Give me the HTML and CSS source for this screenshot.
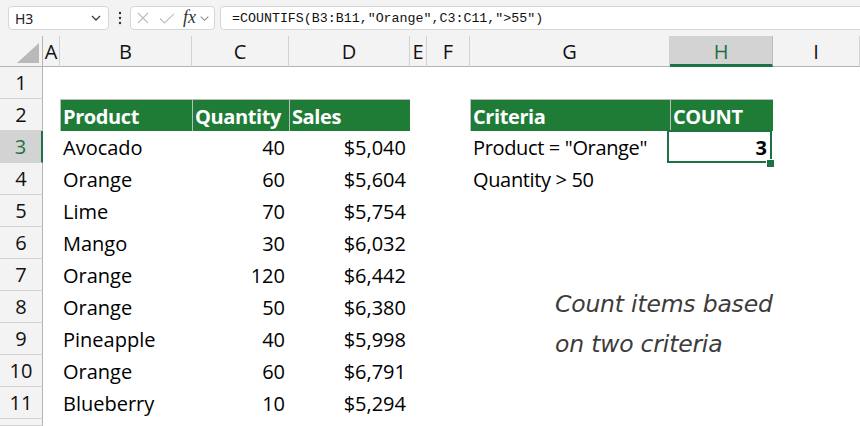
FILE: index.html
```html
<!DOCTYPE html>
<html>
<head>
<meta charset="utf-8">
<link rel="stylesheet" href="styles.css">
</head>
<body>
<div class="fbar">
  <div class="namebox">
    <span class="nbtext">H3</span>
    <svg class="nbchev" width="10" height="6" viewBox="0 0 10 6"><path d="M1 1 L5 5 L9 1" fill="none" stroke="#3a3a3a" stroke-width="1.3"/></svg>
  </div>
  <div class="dots">
    <svg width="4" height="14" viewBox="0 0 4 14"><circle cx="2" cy="2" r="1.2" fill="#333"/><circle cx="2" cy="7" r="1.2" fill="#333"/><circle cx="2" cy="12" r="1.2" fill="#333"/></svg>
  </div>
  <div class="fxbox">
    <svg class="ic-x" width="12" height="12" viewBox="0 0 12 12"><path d="M1 1 L11 11 M11 1 L1 11" stroke="#bdbdbd" stroke-width="1.1" fill="none"/></svg>
    <svg class="ic-ok" width="16" height="11" viewBox="0 0 16 11"><path d="M1 5.5 L5.5 10 L15 0.8" stroke="#bdbdbd" stroke-width="1.1" fill="none"/></svg>
    <span class="fx">fx</span>
    <svg class="ic-chev" width="9" height="5" viewBox="0 0 9 5"><path d="M0.7 0.7 L4.5 4.3 L8.3 0.7" fill="none" stroke="#8a8a8a" stroke-width="1.1"/></svg>
  </div>
  <div class="formula">=COUNTIFS(B3:B11,"Orange",C3:C11,"&gt;55")</div>
</div>

<div class="sheet">
  <div class="corner"><div class="tri"></div></div>
  <div class="ch">A</div><div class="ch">B</div><div class="ch">C</div><div class="ch">D</div><div class="ch">E</div><div class="ch">F</div><div class="ch">G</div><div class="ch ch-sel">H</div><div class="ch">I</div>

  <div class="rh">1</div><div></div><div></div><div></div><div></div><div></div><div></div><div></div><div></div><div></div>

  <div class="rh">2</div><div></div>
  <div class="c hd hd-first">Product</div><div class="c hd">Quantity</div><div class="c hd">Sales</div>
  <div></div><div></div>
  <div class="c hd hd-first">Criteria</div><div class="c hd">COUNT</div><div></div>

  <div class="rh rh-sel">3</div><div></div>
  <div class="c">Avocado</div><div class="c num">40</div><div class="c num">$5,040</div>
  <div></div><div></div>
  <div class="c tight">Product = "Orange"</div><div class="c num bold sel">3</div><div></div>

  <div class="rh">4</div><div></div>
  <div class="c">Orange</div><div class="c num">60</div><div class="c num">$5,604</div>
  <div></div><div></div>
  <div class="c tight">Quantity &gt; 50</div><div></div><div></div>

  <div class="rh">5</div><div></div>
  <div class="c">Lime</div><div class="c num">70</div><div class="c num">$5,754</div>
  <div></div><div></div><div></div><div></div><div></div>

  <div class="rh">6</div><div></div>
  <div class="c">Mango</div><div class="c num">30</div><div class="c num">$6,032</div>
  <div></div><div></div><div></div><div></div><div></div>

  <div class="rh">7</div><div></div>
  <div class="c">Orange</div><div class="c num">120</div><div class="c num">$6,442</div>
  <div></div><div></div><div></div><div></div><div></div>

  <div class="rh">8</div><div></div>
  <div class="c">Orange</div><div class="c num">50</div><div class="c num">$6,380</div>
  <div></div><div></div><div></div><div></div><div></div>

  <div class="rh">9</div><div></div>
  <div class="c">Pineapple</div><div class="c num">40</div><div class="c num">$5,998</div>
  <div></div><div></div><div></div><div></div><div></div>

  <div class="rh">10</div><div></div>
  <div class="c">Orange</div><div class="c num">60</div><div class="c num">$6,791</div>
  <div></div><div></div><div></div><div></div><div></div>

  <div class="rh">11</div><div></div>
  <div class="c">Blueberry</div><div class="c num">10</div><div class="c num">$5,294</div>
  <div></div><div></div><div></div><div></div><div></div>

  <div class="rh"></div><div></div><div></div><div></div><div></div><div></div><div></div><div></div><div></div><div></div>
</div>

<div class="note">Count items based<br>on two criteria</div>
</body>
</html>
```

FILE: styles.css
```css
* { box-sizing: border-box; }
html, body { margin: 0; padding: 0; }
body {
  width: 860px;
  height: 426px;
  overflow: hidden;
  background: #ffffff;
  font-family: "Open Sans", "Noto Sans", sans-serif;
  color: #000;
  position: relative;
}

/* formula bar */
.fbar {
  height: 36px;
  background: #f3f3f3;
  display: flex;
  align-items: flex-start;
  padding: 6px 0 0 8px;
  overflow: hidden;
}
.namebox {
  width: 101px;
  height: 24px;
  background: #fff;
  border: 1px solid #d6d6d6;
  border-radius: 4px;
  display: flex;
  align-items: center;
  justify-content: space-between;
  padding: 0 7px 0 6px;
}
.nbtext {
  font-family: "Noto Sans", "Open Sans", sans-serif;
  font-size: 14px;
  color: #222;
}
.dots {
  width: 21px;
  height: 24px;
  display: flex;
  align-items: center;
  justify-content: center;
}
.fxbox {
  width: 85px;
  height: 24px;
  background: #fff;
  border: 1px solid #d6d6d6;
  border-radius: 4px;
  display: flex;
  align-items: center;
  padding-left: 6px;
}
.ic-x { margin-right: 10px; }
.ic-ok { margin-right: 8px; }
.fx {
  font-family: "Liberation Serif", "DejaVu Serif", serif;
  font-style: italic;
  font-size: 18px;
  color: #333;
  line-height: 1;
  margin-right: 4px;
  margin-top: -2px;
}
.formula {
  flex: 1;
  height: 24px;
  margin-left: 5px;
  margin-right: -10px;
  background: #fff;
  border: 1px solid #d6d6d6;
  border-radius: 4px;
  font-family: "Liberation Mono", "DejaVu Sans Mono", monospace;
  font-size: 13.3px;
  color: #111;
  display: flex;
  align-items: center;
  padding-left: 11px;
  white-space: nowrap;
}

/* sheet grid */
.sheet {
  height: 390px;
  overflow: hidden;
  display: grid;
  grid-template-columns: 43px 17px 132px 97px 121px 17px 43px 200px 103px 1fr;
  grid-template-rows: 31px repeat(11, 32px) 1fr;
  font-size: 20px;
  line-height: 1;
}
.corner {
  background: #f3f3f3;
  border-right: 1px solid #b4b4b4;
  border-bottom: 1px solid #b4b4b4;
  position: relative;
}
.tri {
  position: absolute;
  left: 17px;
  top: 7px;
  width: 22px;
  height: 20px;
  background: #b9b9b9;
  clip-path: polygon(100% 0, 100% 100%, 0 100%);
}
.ch {
  background: #f3f3f3;
  border-right: 1px solid #d2d2d2;
  border-bottom: 1px solid #b4b4b4;
  display: flex;
  align-items: center;
  justify-content: center;
  padding-top: 2px;
  color: #111;
}
.ch-sel {
  background: #d3d3d3;
  color: #1f7145;
  border-bottom: 3px solid #1e7145;
  border-right-color: #bdbdbd;
  padding-top: 4px;
}
.rh {
  background: #f3f3f3;
  border-right: 1px solid #b4b4b4;
  border-bottom: 1px solid #d2d2d2;
  display: flex;
  align-items: center;
  justify-content: center;
  padding-top: 1px;
  color: #111;
}
.rh-sel {
  background: #d3d3d3;
  color: #1f7145;
  border-right: 2px solid #1e7145;
}

.c {
  display: flex;
  align-items: center;
  padding: 2px 3px 0 3px;
  white-space: nowrap;
  overflow: visible;
}
.tight { letter-spacing: -0.35px; }
.num { justify-content: flex-end; padding-right: 4px; }
.bold { font-weight: 700; }

.hd {
  background: #1e7c37;
  color: #fff;
  font-weight: 700;
  letter-spacing: -0.4px;
  padding-left: 2px;
  border-top: 1px solid #bdbdbd;
}
.hd + .hd { border-left: 1px solid #bdbdbd; }
.hd-first { border-left: 1px solid #bdbdbd; }

.sel { position: relative; padding-right: 6px; }
.sel::after {
  content: "";
  position: absolute;
  left: -3px;
  top: -1px;
  right: 1px;
  bottom: 0;
  border: 2px solid #1e7145;
  z-index: 2;
}
.sel::before {
  content: "";
  position: absolute;
  right: -1px;
  bottom: -4px;
  width: 7px;
  height: 7px;
  background: #1e7145;
  border-left: 1px solid #fff;
  border-top: 1px solid #fff;
  z-index: 3;
}

/* floating annotation */
.note {
  position: absolute;
  left: 555px;
  top: 284px;
  font-family: "DejaVu Sans", sans-serif;
  font-style: italic;
  font-size: 23.5px;
  line-height: 40px;
  letter-spacing: -0.2px;
  color: #3c3c3c;
  white-space: nowrap;
}
```
